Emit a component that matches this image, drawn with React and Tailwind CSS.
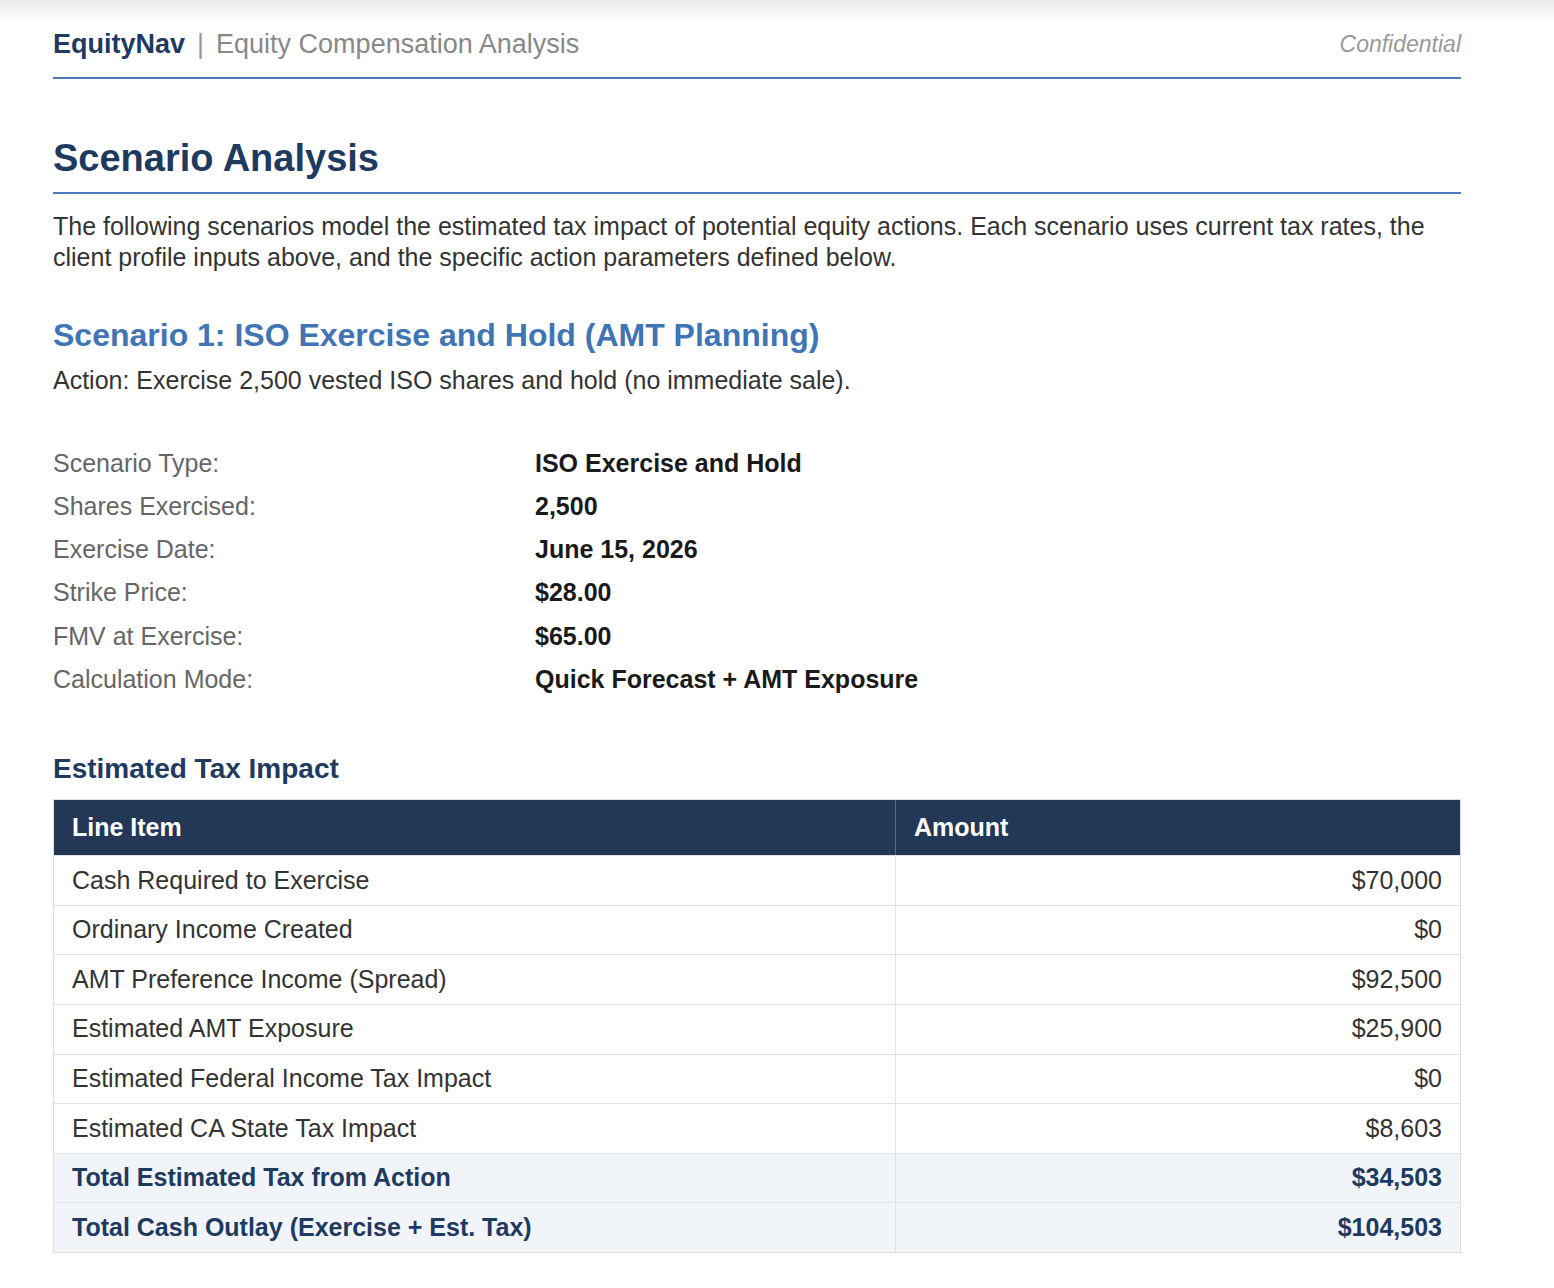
export default function App() {
  const params = [
    ["Scenario Type:", "ISO Exercise and Hold"],
    ["Shares Exercised:", "2,500"],
    ["Exercise Date:", "June 15, 2026"],
    ["Strike Price:", "$28.00"],
    ["FMV at Exercise:", "$65.00"],
    ["Calculation Mode:", "Quick Forecast + AMT Exposure"],
  ];
  const rows = [
    ["Cash Required to Exercise", "$70,000"],
    ["Ordinary Income Created", "$0"],
    ["AMT Preference Income (Spread)", "$92,500"],
    ["Estimated AMT Exposure", "$25,900"],
    ["Estimated Federal Income Tax Impact", "$0"],
    ["Estimated CA State Tax Impact", "$8,603"],
  ];
  const totals = [
    ["Total Estimated Tax from Action", "$34,503"],
    ["Total Cash Outlay (Exercise + Est. Tax)", "$104,503"],
  ];
  return (
    <div className="relative min-h-[1288px] bg-white" style={{ fontFamily: '"Liberation Sans", Arial, sans-serif' }}>
      <div className="absolute left-0 right-0 top-0 h-[24px] bg-gradient-to-b from-[#ececec] to-white" />
      <div className="relative w-[1408px] ml-[53px] pt-[26px]">
        <div className="flex items-end justify-between border-b-2 border-[#4a7ab8] pb-[15px]">
          <div className="text-[27px] leading-[36px]">
            <span className="font-bold text-[#1f3a5f]">EquityNav</span>
            <span className="text-[#999] mx-[12px]">|</span>
            <span className="text-[#888]">Equity Compensation Analysis</span>
          </div>
          <div className="text-[23px] italic text-[#999] leading-[36px]">Confidential</div>
        </div>
        <h1 className="mt-[56px] text-[38px] font-bold text-[#1f3a5f] leading-[46px] pb-[11px] border-b-2 border-[#4a7ab8]">Scenario Analysis</h1>
        <p className="mt-[17px] text-[25px] leading-[31px] text-[#333]">
          The following scenarios model the estimated tax impact of potential equity actions. Each scenario uses current tax rates, the client profile inputs above, and the specific action parameters defined below.
        </p>
        <h2 className="mt-[42px] text-[32px] font-bold text-[#3f74b5] leading-[40px]">Scenario 1: ISO Exercise and Hold (AMT Planning)</h2>
        <p className="mt-[9px] text-[25px] leading-[32px] text-[#333]">Action: Exercise 2,500 vested ISO shares and hold (no immediate sale).</p>
        <div className="mt-[46px] flex flex-col">
          {params.map(([k, v]) => (
            <div key={k} className="flex h-[43.2px] items-center text-[25px]">
              <div className="w-[482px] text-[#666]">{k}</div>
              <div className="font-bold text-[#1a1a1a]">{v}</div>
            </div>
          ))}
        </div>
        <h3 className="mt-[51px] text-[28px] font-bold text-[#1f3a5f] leading-[34px]">Estimated Tax Impact</h3>
        <div className="mt-[13px] border border-[#ddd]">
          <div className="flex h-[55px] bg-[#233756] text-white font-bold text-[25px]">
            <div className="w-[842px] px-[18px] flex items-center border-r border-[#5a6a85]">Line Item</div>
            <div className="flex-1 px-[18px] flex items-center">Amount</div>
          </div>
          {rows.map(([k, v]) => (
            <div key={k} className="flex h-[49.6px] border-t border-[#e2e2e2] text-[25px] text-[#333]">
              <div className="w-[842px] px-[18px] flex items-center border-r border-[#e2e2e2]">{k}</div>
              <div className="flex-1 px-[18px] flex items-center justify-end">{v}</div>
            </div>
          ))}
          {totals.map(([k, v]) => (
            <div key={k} className="flex h-[49.6px] border-t border-[#e2e2e2] bg-[#f1f5fa] text-[25px] font-bold text-[#1f3a5f]">
              <div className="w-[842px] px-[18px] flex items-center border-r border-[#e2e2e2]">{k}</div>
              <div className="flex-1 px-[18px] flex items-center justify-end">{v}</div>
            </div>
          ))}
        </div>
      </div>
    </div>
  );
}
